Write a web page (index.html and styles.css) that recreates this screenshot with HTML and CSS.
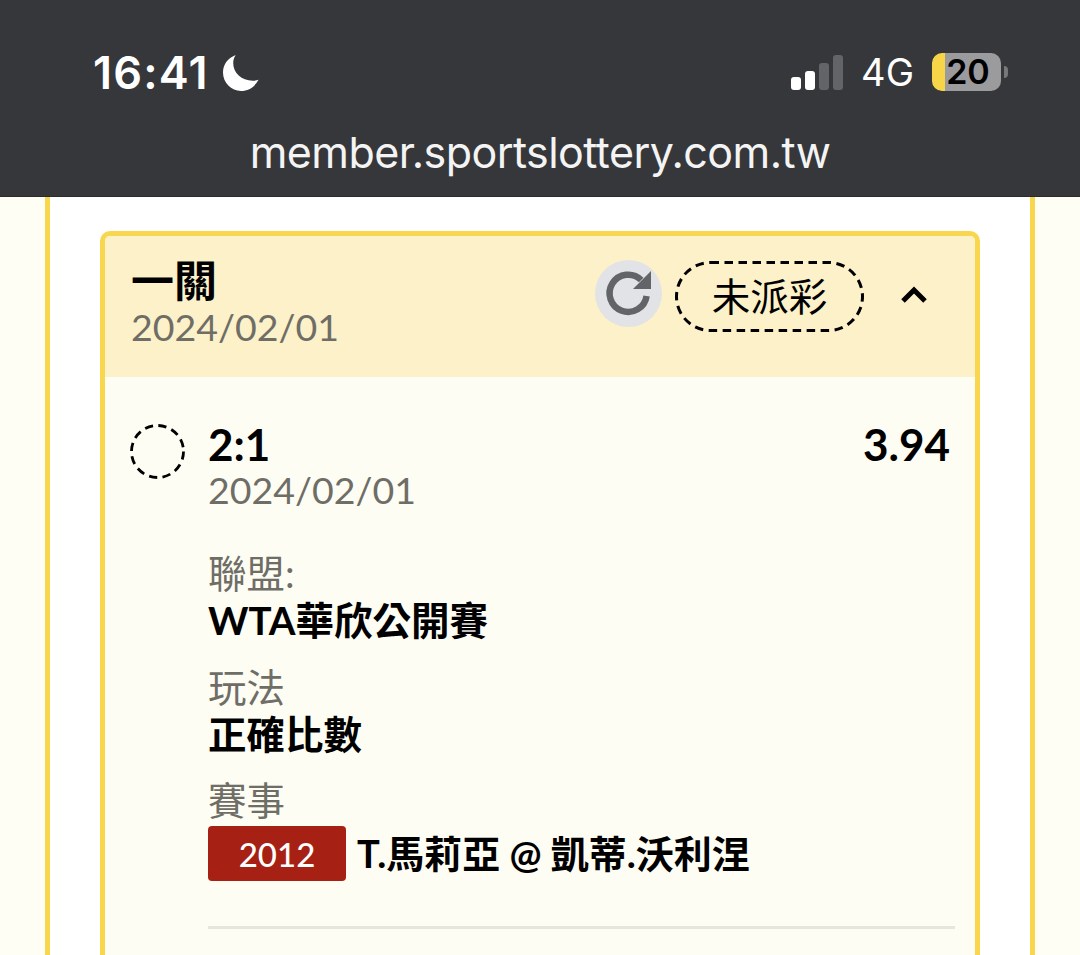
FILE: index.html
```html
<!DOCTYPE html>
<html lang="zh-Hant">
<head>
<meta charset="utf-8">
<title>member.sportslottery.com.tw</title>
<link rel="stylesheet" href="styles.css">
</head>
<body>
<header class="browser">
  <div class="status">
    <div class="status-left">
      <span class="time">16:41</span>
      <svg class="moon" viewBox="0 0 38 38"><path d="M13 1C4.500 4.500 0 11 0 19c0 10.500 8.500 19 18.500 19 7.500 0 14-4 18-11.500-1.500.6-3.500.9-6 .9C19 27.400 10.500 19.500 10.500 9.500c0-3 .8-6 2.500-8.500z"/></svg>
    </div>
    <div class="status-right">
      <div class="signal"><i class="bar b1"></i><i class="bar b2"></i><i class="bar b3"></i><i class="bar b4"></i></div>
      <span class="net">4G</span>
      <div class="battery"><span class="level">20</span></div>
      <i class="nub"></i>
    </div>
  </div>
  <div class="url">member.sportslottery.com.tw</div>
</header>
<main class="page">
  <div class="panel">
    <section class="card">
      <div class="card-head">
        <div class="head-title">
          <div class="title">一關</div>
          <div class="date">2024/02/01</div>
        </div>
        <div class="head-actions">
          <button class="refresh" aria-label="重新整理">
            <svg viewBox="0 0 67 67"><path class="refresh-arc" d="M46.200 20A18.600 18.600 0 1 0 51.600 36"/><path class="refresh-tip" d="M56 11v18H38z"/></svg>
          </button>
          <span class="pill">
            <svg class="pill-line" viewBox="0 0 189 71"><rect x="1.500" y="1.500" width="186" height="68" rx="34"/></svg>
            未派彩
          </span>
          <svg class="chevron" viewBox="0 0 30 20"><path d="M4 17L15 6l11 11"/></svg>
        </div>
      </div>
      <div class="card-body">
        <div class="bet">
          <svg class="pending" viewBox="0 0 55 55"><circle cx="27.500" cy="27.500" r="26"/></svg>
          <div class="bet-main">
            <div class="bet-top">
              <div class="score">2:1</div>
              <div class="odds">3.94</div>
            </div>
            <div class="date">2024/02/01</div>
            <dl class="info">
              <dt>聯盟:</dt>
              <dd>WTA華欣公開賽</dd>
              <dt>玩法</dt>
              <dd>正確比數</dd>
              <dt>賽事</dt>
              <dd class="match"><span class="code">2012</span><span>T.馬莉亞 @ 凱蒂.沃利涅</span></dd>
            </dl>
            <hr class="rule">
          </div>
        </div>
      </div>
    </section>
  </div>
</main>
</body>
</html>
```
FILE: styles.css
```css
* { box-sizing: border-box; }
html, body { margin: 0; height: 955px; overflow: hidden; }
body {
  background: #fffef5;
  font-family: Lato, "Noto Sans CJK TC", sans-serif;
  color: #000;
}
.browser {
  height: 197px;
  background: #36373a;
  color: #fff;
  padding-top: 48px;
  border-bottom: 1px solid #2b2b2b;
}
.status {
  display: flex;
  justify-content: space-between;
  align-items: center;
  height: 50px;
  padding: 0 72px 0 93px;
}
.status-left { display: flex; align-items: center; gap: 14px; }
.time { font: 600 45px/50px Inter, sans-serif; letter-spacing: 1.200px; }
.moon { width: 37px; height: 37px; fill: #fff; margin-top: -2px; }
.status-right { display: flex; align-items: center; margin-top: -2px; }
.signal { display: flex; align-items: flex-end; gap: 4px; height: 35px; margin-right: 18px; }
.bar { display: block; width: 10px; border-radius: 3px; background: #fff; }
.b1 { height: 13px; }
.b2 { height: 19px; }
.b3 { height: 27px; background: #636467; }
.b4 { height: 35px; background: #636467; }
.net { font: 400 38px/50px Inter, sans-serif; margin-right: 18px; }
.battery {
  width: 69px;
  height: 38px;
  border-radius: 10px;
  background: linear-gradient(90deg, #f7d548 0 13px, #9b9b9e 13px);
  text-align: center;
}
.level { display: block; font: 600 34px/38px Inter, sans-serif; color: #000; padding-left: 3px; }
.nub { width: 4px; height: 12px; margin-left: 3px; border-radius: 0 6px 6px 0; background: #77787a; }
.url {
  text-align: center;
  font: 400 43px/50px Inter, sans-serif;
  letter-spacing: -0.550px;
  margin-top: 29px;
  color: #f4f4f4;
}
.page { padding: 0 45px; }
.panel {
  height: 758px;
  background: #fff;
  border-left: 5px solid #f8d74f;
  border-right: 5px solid #f8d74f;
  padding: 34px 50px 0;
}
.card {
  height: 760px;
  border: 5px solid #f8d74f;
  border-radius: 10px;
  background: #fefdf4;
  overflow: hidden;
}
.card-head {
  height: 141px;
  background: #fdf1c9;
  display: flex;
  justify-content: space-between;
  padding: 21px 46px 0 26px;
}
.title { font-size: 43px; line-height: 47px; font-weight: 700; }
.date { font-size: 37.500px; line-height: 45px; color: #6f6e66; }
.head-actions { display: flex; align-items: flex-start; padding-top: 3px; }
.refresh {
  width: 67px;
  height: 67px;
  padding: 0;
  border: 0;
  border-radius: 50%;
  background: #e2e3e6;
  margin-right: 13px;
}
.refresh svg { display: block; width: 67px; height: 67px; }
.refresh-arc { fill: none; stroke: #636467; stroke-width: 6.500; }
.refresh-tip { fill: #636467; }
.pill {
  position: relative;
  width: 189px;
  height: 71px;
  margin-top: 1px;
  font-size: 38.500px;
  line-height: 71px;
  text-align: center;
}
.pill-line {
  position: absolute;
  left: 0;
  top: 0;
  width: 189px;
  height: 71px;
  fill: none;
  stroke: #000;
  stroke-width: 3;
  stroke-dasharray: 8.500 5.500;
}
.chevron { width: 30px; height: 20px; margin: 24px 0 0 35px; fill: none; stroke: #000; stroke-width: 5; }
.card-body { padding: 45px 20px 0 25px; }
.bet { display: flex; gap: 23px; }
.pending {
  flex: none;
  width: 55px;
  height: 55px;
  margin-top: 2px;
  fill: none;
  stroke: #000;
  stroke-width: 2.800;
  stroke-dasharray: 8.200 5.420;
}
.bet-main { flex: 1; }
.bet-top { display: flex; justify-content: space-between; padding-right: 5px; }
.score, .odds { font-size: 44px; line-height: 45px; font-weight: 700; }
.info { margin: 38px 0 0; }
.info dt { font-size: 38.500px; line-height: 47px; color: #6f6e66; }
.info dd { margin: 0 0 19.500px; font-size: 38.500px; line-height: 47px; font-weight: 700; }
.info .match { display: flex; align-items: center; gap: 11px; margin: 2px 0 0; font-size: 38px; line-height: 55px; }
.code {
  width: 138px;
  height: 55px;
  border-radius: 4px;
  background: #a72014;
  color: #fff;
  font-size: 33px;
  font-weight: 500;
  line-height: 56px;
  text-align: center;
}
.rule { margin: 45px 0 0; border: 0; border-top: 3px solid #e6e6dc; }
```
